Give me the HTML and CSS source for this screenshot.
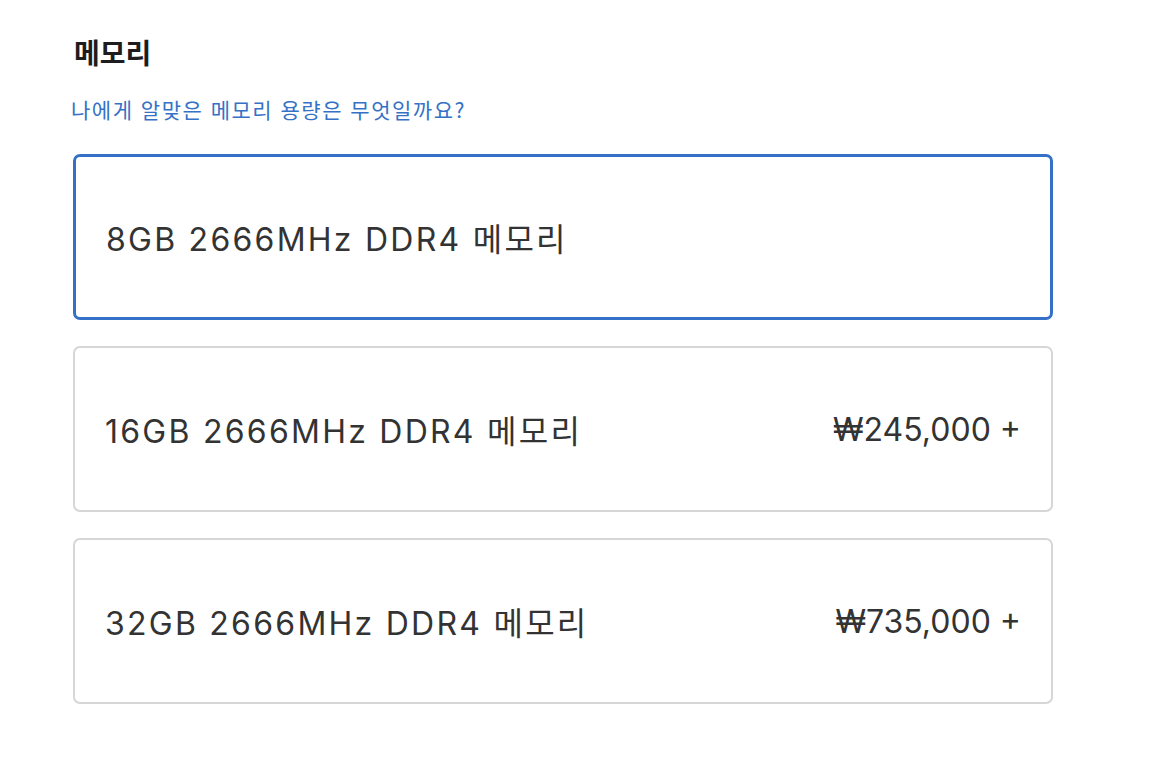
FILE: index.html
```html
<!DOCTYPE html>
<html lang="ko">
<head>
<meta charset="utf-8">
<link rel="stylesheet" href="styles.css">
</head>
<body>
<section class="memory">
  <h2 class="title">메모리</h2>
  <a class="help" href="#">나에게 알맞은 메모리 용량은 무엇일까요?</a>
  <div class="options">
    <div class="option selected">
      <span class="name">8GB 2666MHz DDR4 메모리</span>
    </div>
    <div class="option">
      <span class="name">16GB 2666MHz DDR4 메모리</span>
      <span class="price">₩245,000 +</span>
    </div>
    <div class="option">
      <span class="name">32GB 2666MHz DDR4 메모리</span>
      <span class="price">₩735,000 +</span>
    </div>
  </div>
</section>
</body>
</html>
```
FILE: styles.css
```css
html, body {
  margin: 0;
  padding: 0;
  background: #ffffff;
}
body {
  font-family: Inter, "Noto Sans CJK KR", sans-serif;
  color: #333333;
}
.memory {
  width: 980px;
  padding: 34px 0 0 73px;
}
.title {
  margin: 0 0 0 1px;
  font-family: "Noto Sans CJK KR", sans-serif;
  font-size: 28px;
  font-weight: 700;
  line-height: 36px;
  color: #1d1d1f;
}
.help {
  display: block;
  margin: 25px 0 0 -2px;
  font-family: "Noto Sans CJK KR", sans-serif;
  font-size: 21px;
  letter-spacing: 1.5px;
  line-height: 28px;
  color: #3572c6;
  text-decoration: none;
}
.options {
  display: flex;
  flex-direction: column;
  gap: 26px;
  margin-top: 31px;
}
.option {
  box-sizing: border-box;
  height: 166px;
  border: 2px solid #d6d6d6;
  border-radius: 7px;
  display: flex;
  align-items: center;
  justify-content: space-between;
  padding: 0 30px 0 30px;
}
.option.selected {
  border: 3px solid #3570c7;
  padding-left: 30px;
}
.name {
  font-size: 32px;
  letter-spacing: 2.25px;
  color: #333333;
}
.price {
  font-size: 32px;
  letter-spacing: 0;
  color: #333333;
}
```
